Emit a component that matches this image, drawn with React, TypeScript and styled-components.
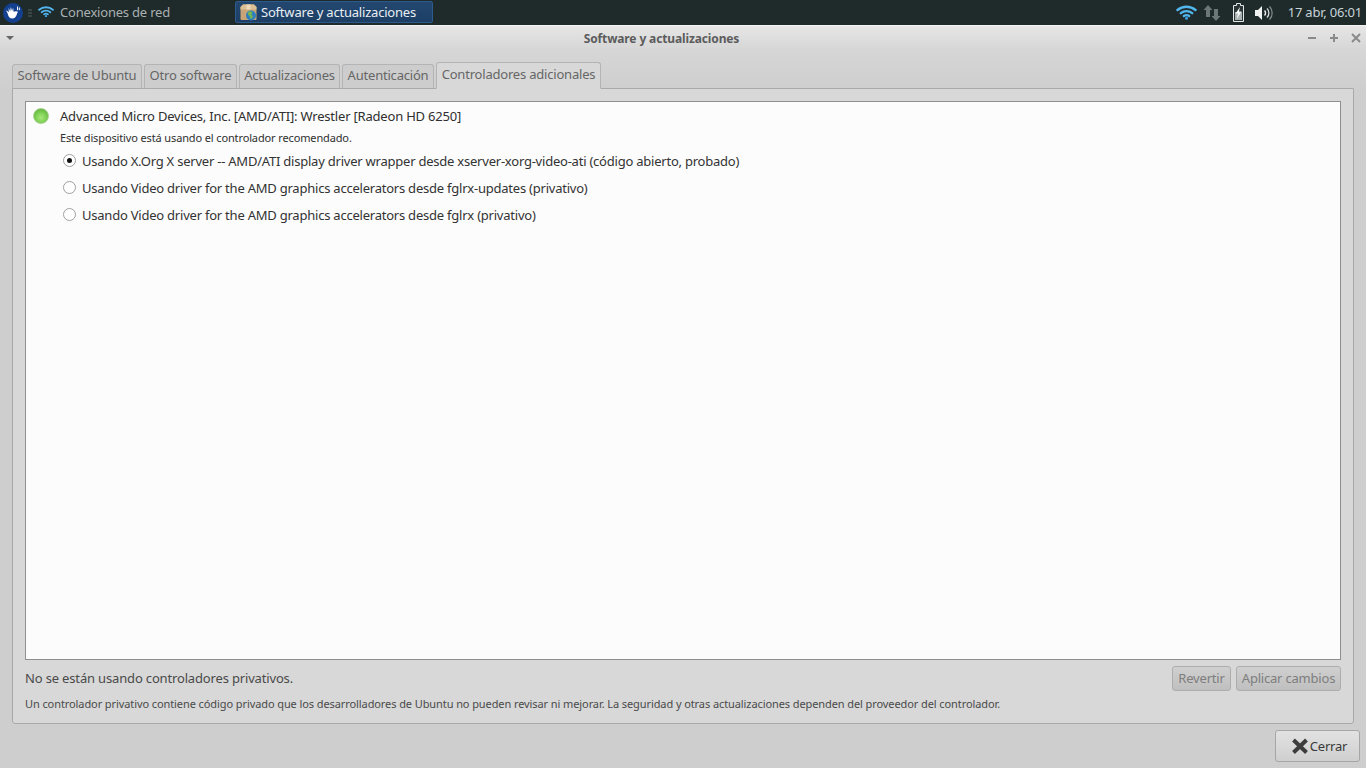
import React from "react";
import styled, { createGlobalStyle } from "styled-components";

const Global = createGlobalStyle`
  html, body { margin: 0; padding: 0; width: 1366px; height: 768px; overflow: hidden; background: #cecece; }
  * { box-sizing: border-box; }
  body { font-family: "Noto Sans", "Open Sans", sans-serif; font-size: 13px; letter-spacing: -0.2px; color: #333; }
`;

const Page = styled.div`
  width: 1366px;
  height: 768px;
  display: flex;
  flex-direction: column;
`;

const Panel = styled.header`
  height: 25px;
  flex: none;
  background: #1f2a2b;
  display: flex;
  align-items: center;
  color: #c4cccc;
`;

const Grip = styled.span`
  width: 4px;
  height: 9px;
  margin: 2px 0 0 5px;
  background: repeating-linear-gradient(to bottom, #3b4444 0 2px, transparent 2px 3px);
`;

const PanelLauncher = styled.span`
  display: flex;
  align-items: center;
  margin-left: 6px;
  width: 197px;
  gap: 6px;
  padding-bottom: 2px;
  color: #a9b1b1;
`;

const TaskButton = styled.div`
  width: 198px;
  height: 22px;
  margin-top: -1px;
  padding-left: 4px;
  display: flex;
  align-items: center;
  gap: 4px;
  background: linear-gradient(#23476f, #1d3f66);
  border: 1px solid #2c5a8c;
  border-radius: 2px;
  color: #e8eef2;
`;

const Tray = styled.div`
  margin-left: auto;
  display: flex;
  align-items: center;
  padding-right: 4px;
`;

const Clock = styled.span`
  margin-left: 14px;
  padding-bottom: 1px;
  color: #c8d4da;
`;

const Win = styled.main`
  flex: 1;
  display: flex;
  flex-direction: column;
  border-top: 1px solid #f4f4f4;
  background: #cecece;
`;

const TitleBar = styled.div`
  height: 24px;
  flex: none;
  display: flex;
  align-items: center;
  padding: 0 6px;
  position: relative;
  background: linear-gradient(#e6e6e6, #d6d6d6);
`;

const Title = styled.span`
  position: absolute;
  left: 0;
  right: 43px;
  text-align: center;
  font-size: 12px;
  font-weight: 700;
  letter-spacing: -0.13px;
  color: #5c5c5c;
`;

const MenuArrow = styled.span`
  width: 0;
  height: 0;
  border-left: 4px solid transparent;
  border-right: 4px solid transparent;
  border-top: 4px solid #666;
`;

const WinControls = styled.div`
  margin-left: auto;
  margin-right: -1px;
  display: flex;
  gap: 12px;
  align-items: center;
`;

const Body = styled.div`
  flex: 1;
  display: flex;
  flex-direction: column;
  padding: 12px 12px 0;
  background: linear-gradient(#d6d6d6, #cecece 40px);
`;

const TabRow = styled.div`
  height: 27px;
  flex: none;
  display: flex;
  align-items: flex-end;
  gap: 2px;
  margin-bottom: -1px;
  position: relative;
`;

const Tab = styled.div<{ $active?: boolean; $w: number }>`
  width: ${(p) => p.$w}px;
  height: ${(p) => (p.$active ? 27 : 25)}px;
  padding-bottom: ${(p) => (p.$active ? 3 : 4)}px;
  display: flex;
  align-items: center;
  justify-content: center;
  color: #666;
  background: ${(p) => (p.$active ? "#d8d8d8" : "#cdcdcd")};
  border: 1px solid #b4b4b4;
  border-bottom: ${(p) => (p.$active ? "1px solid #d8d8d8" : "1px solid #a9a9a9")};
  border-radius: 3px 3px 0 0;
  white-space: nowrap;
`;

const Notebook = styled.section`
  height: 636px;
  flex: none;
  display: flex;
  flex-direction: column;
  padding: 12px 12px 0;
  background: #d8d8d8;
  border: 1px solid #a9a9a9;
  border-radius: 0 0 3px 3px;
`;

const List = styled.div`
  height: 559px;
  flex: none;
  background: #fcfcfc;
  border: 1px solid #8f8f8f;
  padding: 4px 7px;
`;

const DeviceRow = styled.div`
  display: flex;
  align-items: center;
  height: 20px;
  gap: 11px;
`;

const Led = styled.span`
  width: 16px;
  height: 16px;
  margin-top: -1px;
  border-radius: 50%;
  background: radial-gradient(circle at 50% 62%, #a6e67c 0, #84d35a 40%, #4fa62c 100%);
  border: 1px solid #a9d192;
`;

const DeviceName = styled.span`
  color: #2f2f2f;
`;

const DeviceNote = styled.div`
  margin: 3px 0 1px 27px;
  height: 17px;
  line-height: 17px;
  font-size: 11px;
  letter-spacing: -0.13px;
  color: #2f2f2f;
`;

const Option = styled.label`
  display: flex;
  align-items: center;
  height: 27px;
  margin-left: 30px;
  gap: 6px;
  color: #333;
  letter-spacing: -0.225px;
  white-space: nowrap;
`;

const Radio = styled.span<{ $on?: boolean }>`
  width: 13px;
  height: 13px;
  flex: none;
  border-radius: 50%;
  border: 1px solid #a0a0a0;
  background: #fff;
  display: flex;
  align-items: center;
  justify-content: center;
  &::after {
    content: "";
    width: 5px;
    height: 5px;
    border-radius: 50%;
    background: ${(p) => (p.$on ? "#111" : "transparent")};
  }
`;

const StatusRow = styled.div`
  height: 37px;
  flex: none;
  display: flex;
  align-items: center;
  justify-content: space-between;
  color: #4a4a4a;
`;

const StatusText = styled.span`
  padding-bottom: 2px;
  letter-spacing: -0.16px;
`;

const ActionGroup = styled.div`
  display: flex;
  gap: 5px;
`;

const DisabledButton = styled.div<{ $w: number }>`
  width: ${(p) => p.$w}px;
  height: 25px;
  padding-bottom: 2px;
  display: flex;
  align-items: center;
  justify-content: center;
  color: #7e7e7e;
  background: linear-gradient(#d0d0d0, #bfbfbf);
  border: 1px solid #adadad;
  border-radius: 3px;
`;

const Footnote = styled.div`
  font-size: 11px;
  line-height: 16px;
  margin-top: -1px;
  letter-spacing: -0.09px;
  color: #4a4a4a;
  white-space: nowrap;
`;

const Footer = styled.div`
  flex: 1;
  display: flex;
  justify-content: flex-end;
  align-items: flex-start;
  margin-right: -6px;
  margin-top: 6px;
`;

const CloseButton = styled.div`
  width: 85px;
  height: 32px;
  padding-left: 4px;
  display: flex;
  align-items: center;
  justify-content: center;
  gap: 2px;
  color: #3a3a3a;
  background: linear-gradient(#e2e2e2, #cfcfcf);
  border: 1px solid #a6a6a6;
  border-radius: 3px;
`;

const Wifi = ({ width = 21, id }: { width?: number; id: string }) => (
  <svg width={width} height={(width * 15) / 21} viewBox="0 0 21 15" fill="none" strokeLinecap="round">
    <defs>
      <linearGradient id={id} x1="0" y1="0" x2="0" y2="1">
        <stop offset="0" stopColor="#7fd0f5" />
        <stop offset="1" stopColor="#2f9ae0" />
      </linearGradient>
    </defs>
    <g style={{ stroke: "#52b6ee" }}>
      <path d="M1.500 5C6.500.6 14.500.6 19.500 5" strokeWidth="2.500" />
      <path d="M4.800 8.200C8 5.400 13 5.400 16.200 8.200" strokeWidth="2.400" />
      <path d="M7.800 11C9.300 9.900 11.700 9.900 13.200 11" strokeWidth="2.200" />
    </g>
    <circle cx="10.500" cy="13.300" r="1.500" fill="#3aa0e4" />
  </svg>
);

const Logo = () => (
  <svg width="20" height="20" viewBox="0 0 20 20" style={{ marginLeft: 3 }}>
    <circle cx="10" cy="10" r="10" fill="#14418f" />
    <path d="M3 7.500c1.300.4 2.100 1.100 2.800 1.700L5.600 5l1.600 3.300.6-4.300 1.300 4 1-3.200.5 4c1.500-.8 3.300-.8 4.400-.1-.7 1-1 2-1.400 3.200-.6 2-2.200 3.600-4.500 3.500-2.300-.1-3.300-1.400-3.900-3.200C4.800 10.400 4.100 8.800 3 7.500z" fill="#fff" />
    <path d="M14.500 3.500v3.700M16.300 4.500v2.700" stroke="#fff" strokeWidth="1" />
  </svg>
);

const PackageIcon = () => (
  <svg width="17" height="17" viewBox="0 0 17 17">
    <path d="M.5 3 3 .5h11L16.500 3v12a1 1 0 0 1-1 1h-14a1 1 0 0 1-1-1z" fill="#c9a476" />
    <path d="M.5 5.500h16V3L14 .5H3L.5 3z" fill="#dcbf94" />
    <path d="M6.500.5h4v5h-4z" fill="#eed9b8" />
    <circle cx="11" cy="11.500" r="5" fill="#2f7fc0" />
    <path d="M8 8c1.500-1 3.500-.8 4.300.2.500.9-.9 1.300-.9 2.200s1.800 1 1.300 2.800c-.3 1-1.500 1.800-2.400 1.300-.3-1.600-.4-2.400-1.400-3-1-.7-1.500-2.300-.3-3.500z" fill="#72b84e" />
  </svg>
);

const NetArrows = () => (
  <svg width="18" height="18" viewBox="0 0 18 18" fill="#6d7676" style={{ marginLeft: 6 }}>
    <path d="M5 1 .5 6H3v7h4V6h2.500z" />
    <path d="M13 17l4.500-5H15V5h-4v7H8.500z" />
  </svg>
);

const Battery = () => (
  <svg width="11" height="19" viewBox="0 0 11 19" style={{ marginLeft: 12 }}>
    <path d="M3.500.5h4v2h3v16H.5v-16h3z" fill="#2b3535" stroke="#e4e8e8" />
    <path d="M2 9h7v8H2z" fill="#aab2b2" />
    <path d="M7 4 2.500 10.500H5L3.800 16 8.500 8.500H6z" fill="#f6f8f8" />
  </svg>
);

const Volume = () => (
  <svg width="19" height="16" viewBox="0 0 19 16" fill="none" style={{ marginLeft: 11 }}>
    <path d="M0 5h3l4-4v14l-4-4H0z" fill="#f0f2f2" />
    <path d="M9.500 5.500a3.500 3.500 0 0 1 0 5" stroke="#f0f2f2" strokeWidth="1.400" />
    <path d="M12 3.500a6.300 6.300 0 0 1 0 9" stroke="#d8dcdc" strokeWidth="1.300" />
    <path d="M14.500 1.500a9.300 9.300 0 0 1 0 13" stroke="#7f8888" strokeWidth="1.300" />
  </svg>
);

const WinIcon = ({ d }: { d: string }) => (
  <svg width="10" height="10" viewBox="0 0 10 10" fill="none" stroke="#8a8a8a" strokeWidth="2">
    <path d={d} />
  </svg>
);

const CloseX = () => (
  <svg width="16" height="16" viewBox="0 0 16 16" fill="none" stroke="#3c3c3c" strokeWidth="4">
    <path d="M1.500 2 14.500 14.500M14.500 2 1.500 14.500" />
  </svg>
);

export default function App() {
  return (
    <Page>
      <Global />
      <Panel>
        <Logo />
        <Grip />
        <PanelLauncher>
          <Wifi width={16} id="wifi-a" />
          Conexiones de red
        </PanelLauncher>
        <TaskButton>
          <PackageIcon />
          Software y actualizaciones
        </TaskButton>
        <Tray>
          <Wifi id="wifi-b" />
          <NetArrows />
          <Battery />
          <Volume />
          <Clock>17 abr, 06:01</Clock>
        </Tray>
      </Panel>
      <Win>
        <TitleBar>
          <MenuArrow />
          <Title>Software y actualizaciones</Title>
          <WinControls>
            <WinIcon d="M1 5h8" />
            <WinIcon d="M1 5h8M5 1v8" />
            <WinIcon d="M1 1l8 8M9 1l-8 8" />
          </WinControls>
        </TitleBar>
        <Body>
          <TabRow>
            <Tab $w={130}>Software de Ubuntu</Tab>
            <Tab $w={93}>Otro software</Tab>
            <Tab $w={101}>Actualizaciones</Tab>
            <Tab $w={92}>Autenticación</Tab>
            <Tab $active $w={165}>Controladores adicionales</Tab>
          </TabRow>
          <Notebook>
            <List>
              <DeviceRow>
                <Led />
                <DeviceName>Advanced Micro Devices, Inc. [AMD/ATI]: Wrestler [Radeon HD 6250]</DeviceName>
              </DeviceRow>
              <DeviceNote>Este dispositivo está usando el controlador recomendado.</DeviceNote>
              <Option>
                <Radio $on />
                Usando X.Org X server -- AMD/ATI display driver wrapper desde xserver-xorg-video-ati (código abierto, probado)
              </Option>
              <Option>
                <Radio />
                Usando Video driver for the AMD graphics accelerators desde fglrx-updates (privativo)
              </Option>
              <Option>
                <Radio />
                Usando Video driver for the AMD graphics accelerators desde fglrx (privativo)
              </Option>
            </List>
            <StatusRow>
              <StatusText>No se están usando controladores privativos.</StatusText>
              <ActionGroup>
                <DisabledButton $w={59}>Revertir</DisabledButton>
                <DisabledButton $w={105}>Aplicar cambios</DisabledButton>
              </ActionGroup>
            </StatusRow>
            <Footnote>
              Un controlador privativo contiene código privado que los desarrolladores de Ubuntu no pueden revisar ni mejorar. La seguridad y otras actualizaciones dependen del proveedor del controlador.
            </Footnote>
          </Notebook>
          <Footer>
            <CloseButton>
              <CloseX />
              Cerrar
            </CloseButton>
          </Footer>
        </Body>
      </Win>
    </Page>
  );
}
